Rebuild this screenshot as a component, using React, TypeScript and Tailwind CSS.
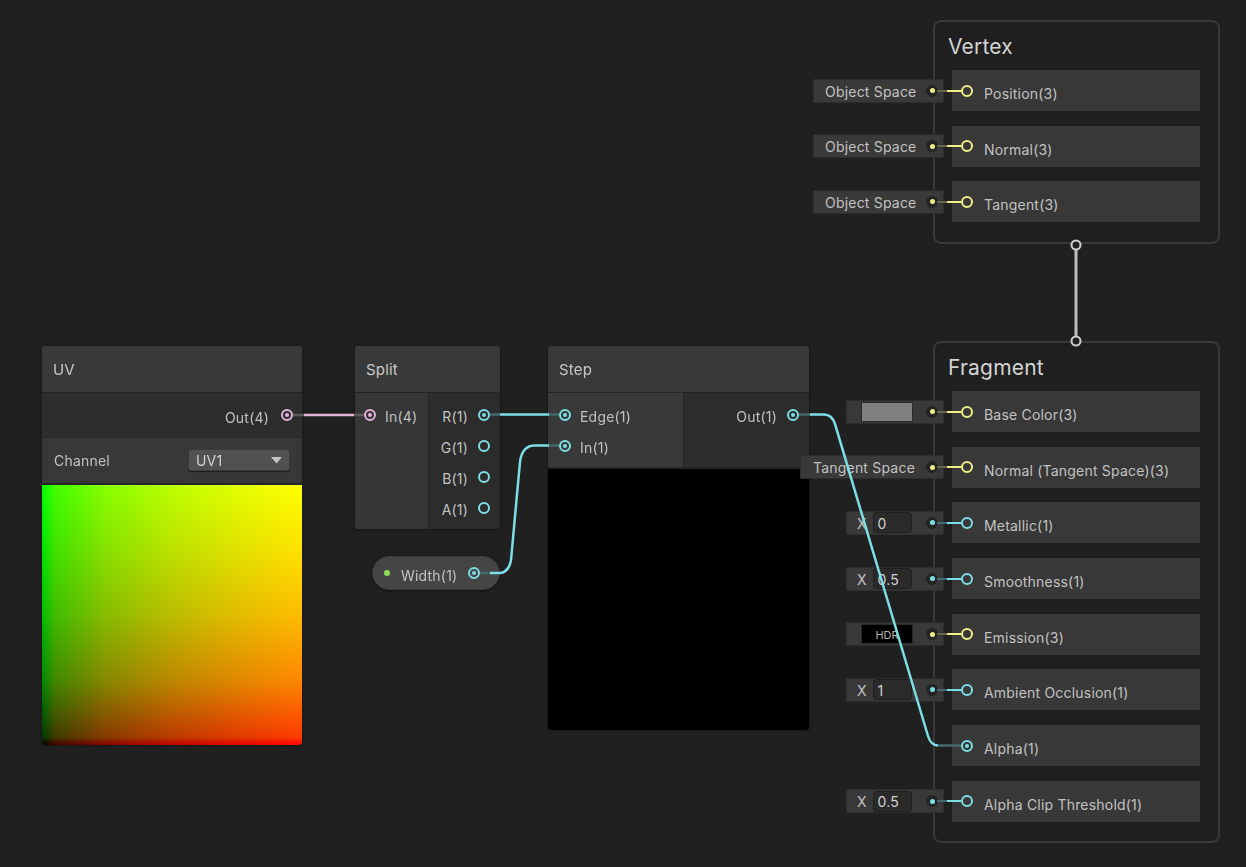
import React from 'react';

type C = 'cyan' | 'yellow' | 'pink';

const RING: Record<C, string> = {
  cyan: 'border-[#7ddfe6]',
  yellow: 'border-[#efef86]',
  pink: 'border-[#e5b3d9]',
};
const DOT: Record<C, string> = {
  cyan: 'bg-[#7ddfe6]',
  yellow: 'bg-[#efef86]',
  pink: 'bg-[#e5b3d9]',
};
const DIM: Record<C, string> = {
  cyan: 'bg-[#45686b]',
  yellow: 'bg-[#66664a]',
  pink: 'bg-[#5c5c5c]',
};

function Port({ c, filled }: { c: C; filled?: boolean }) {
  return (
    <span
      className={`flex h-[12px] w-[12px] shrink-0 items-center justify-center rounded-full border-2 ${RING[c]}`}
    >
      {filled && <span className={`h-[4px] w-[4px] rounded-full ${DOT[c]}`} />}
    </span>
  );
}

function Box({ w, c, children }: { w: string; c: C; children: React.ReactNode }) {
  return (
    <div
      className={`absolute right-full top-1/2 mr-[8px] flex h-[24px] -translate-y-1/2 items-center border border-[#2d2d2d] bg-[#393939] ${w}`}
    >
      {children}
      <span className="ml-auto mr-[5px] flex h-[12px] w-[12px] shrink-0 items-center justify-center rounded-full bg-[#242424]">
        <span className={`h-[5px] w-[5px] rounded-full ${DOT[c]}`} />
      </span>
    </div>
  );
}

function XField({ v }: { v: string }) {
  return (
    <>
      <span className="ml-[10px] pt-[1px] text-[14px] text-[#c2c2c2]">X</span>
      <span className="ml-[6px] flex h-[21px] w-[39px] items-center rounded-[3px] border border-[#1f1f1f] bg-[#2a2a2a] pl-[4px] pt-[1px] text-[14px] tracking-[0.2px] text-[#d0d0d0]">
        {v}
      </span>
    </>
  );
}

function MRow({
  label,
  c,
  filled,
  input,
  wire = true,
}: {
  label: string;
  c: C;
  filled?: boolean;
  input?: React.ReactNode;
  wire?: boolean;
}) {
  return (
    <div className="relative flex h-[41px] items-center bg-[#383838] pl-[9px]">
      {input}
      {wire && (
        <>
          <span className={`absolute left-[-15px] top-1/2 h-[2px] w-[10px] -translate-y-1/2 ${DIM[c]}`} />
          <span className={`absolute left-[-5px] top-1/2 h-[2px] w-[14px] -translate-y-1/2 ${DOT[c]}`} />
        </>
      )}
      <Port c={c} filled={filled} />
      <span className="ml-[11px] pt-[6px] text-[14px] tracking-[0.2px] text-[#c2c2c2]">{label}</span>
    </div>
  );
}

function Header({ title }: { title: string }) {
  return (
    <div className="flex h-[47px] items-center border-b border-[#242424] bg-[#393939] pl-[11px] pt-[2px] text-[15px] tracking-[0.2px] text-[#c8c8c8]">
      {title}
    </div>
  );
}

function InRow({ label, c, filled }: { label: string; c: C; filled?: boolean }) {
  return (
    <div className="flex h-[31px] items-center">
      <Port c={c} filled={filled} />
      <span className="ml-[9px] pt-[4px] text-[14px] tracking-[0.2px] text-[#c2c2c2]">{label}</span>
    </div>
  );
}

function OutRow({ label, c, filled }: { label: string; c: C; filled?: boolean }) {
  return (
    <div className="flex h-[31px] items-center justify-end gap-[10px]">
      <span className="pt-[4px] text-[14px] tracking-[0.2px] text-[#c2c2c2]">{label}</span>
      <Port c={c} filled={filled} />
    </div>
  );
}

export default function App() {
  return (
    <div className="relative h-[867px] w-[1246px] overflow-hidden bg-[#202020] font-['Inter',sans-serif]">
      {/* UV node */}
      <div className="absolute left-[42px] top-[346px] w-[260px] overflow-hidden rounded-[3px] bg-[#2d2d2d] shadow-[0_0_3px_rgba(0,0,0,0.5)]">
        <Header title="UV" />
        <div className="flex h-[45px] items-center justify-end gap-[12px] border-b border-[#262626] bg-[#2d2d2d] pr-[9px]">
          <span className="pt-[4px] text-[14px] tracking-[0.2px] text-[#c2c2c2]">Out(4)</span>
          <Port c="pink" filled />
        </div>
        <div className="flex h-[47px] items-center justify-between border-b-2 border-[#252525] bg-[#383838] pb-[1px] pl-[12px] pr-[12px]">
          <span className="text-[14px] tracking-[0.2px] text-[#c2c2c2]">Channel</span>
          <div className="flex h-[22px] w-[102px] items-center justify-between rounded-[3px] border border-[#3c3c3c] bg-[#515151] pl-[7px] pr-[7px] shadow-[0_1px_1px_rgba(0,0,0,0.5)]">
            <span className="pt-[1px] text-[14px] tracking-[0.2px] text-[#d2d2d2]">UV1</span>
            <svg width="11" height="7" viewBox="0 0 11 7">
              <polygon points="0,0 11,0 5.5,6.5" fill="#c4c4c4" />
            </svg>
          </div>
        </div>
        <div className="relative h-[260px] w-full bg-[linear-gradient(to_right,#000_0%,#410000_5%,#880000_25%,#bc0000_50%,#e10000_75%,#ff0000_100%)]">
          <div className="absolute inset-0 mix-blend-screen bg-[linear-gradient(to_top,#000_0%,#003a00_3%,#008800_25%,#00bc00_50%,#00e100_75%,#00ff00_100%)]" />
        </div>
      </div>

      {/* Split node */}
      <div className="absolute left-[355px] top-[346px] w-[145px] overflow-hidden rounded-[3px] bg-[#2c2c2c] shadow-[0_0_3px_rgba(0,0,0,0.5)]">
        <Header title="Split" />
        <div className="flex h-[136px]">
          <div className="w-[74px] border-r border-[#262626] bg-[#363636] pl-[9px] pt-[6px]">
            <InRow label="In(4)" c="pink" filled />
          </div>
          <div className="flex-1 bg-[#2c2c2c] pr-[10px] pt-[6px]">
            <OutRow label="R(1)" c="cyan" filled />
            <OutRow label="G(1)" c="cyan" />
            <OutRow label="B(1)" c="cyan" />
            <OutRow label="A(1)" c="cyan" />
          </div>
        </div>
      </div>

      {/* Width property */}
      <div className="absolute left-[372px] top-[556px] flex h-[34px] w-[128px] items-center rounded-full border border-[#3a3a3a] bg-[#454545] pl-[11px] shadow-[0_1px_3px_rgba(0,0,0,0.5)]">
        <span className="h-[6px] w-[6px] rounded-full bg-[#8fdc5a]" />
        <span className="ml-[11px] pt-[4px] text-[14px] tracking-[0.2px] text-[#c2c2c2]">Width(1)</span>
        <span className="ml-[11px]">
          <Port c="cyan" filled />
        </span>
      </div>

      {/* Step node */}
      <div className="absolute left-[548px] top-[346px] w-[261px] overflow-hidden rounded-[3px] bg-[#2c2c2c] shadow-[0_0_3px_rgba(0,0,0,0.5)]">
        <Header title="Step" />
        <div className="flex h-[76px] border-b-2 border-[#252525]">
          <div className="w-[136px] border-r border-[#262626] bg-[#393939] pl-[11px] pt-[6px]">
            <InRow label="Edge(1)" c="cyan" filled />
            <InRow label="In(1)" c="cyan" filled />
          </div>
          <div className="flex-1 bg-[#2c2c2c] pr-[10px] pt-[6px]">
            <OutRow label="Out(1)" c="cyan" filled />
          </div>
        </div>
        <div className="h-[261px] w-full bg-black" />
      </div>

      {/* Vertex block */}
      <div className="absolute left-[933px] top-[20px] h-[224px] w-[287px] rounded-[8px] border-2 border-[#393939] bg-[#1f1f1f]">
        <div className="flex h-[48px] items-center pl-[13px] pt-[2px] text-[21px] tracking-[0.2px] text-[#d4d4d4]">Vertex</div>
        <div className="ml-[17px] flex w-[248px] flex-col gap-[14.7px]">
          <MRow
            label="Position(3)"
            c="yellow"
            input={
              <Box w="w-[131px]" c="yellow">
                <span className="pl-[11px] pt-[1px] text-[14px] tracking-[0.2px] text-[#c2c2c2]">Object Space</span>
              </Box>
            }
          />
          <MRow
            label="Normal(3)"
            c="yellow"
            input={
              <Box w="w-[131px]" c="yellow">
                <span className="pl-[11px] pt-[1px] text-[14px] tracking-[0.2px] text-[#c2c2c2]">Object Space</span>
              </Box>
            }
          />
          <MRow
            label="Tangent(3)"
            c="yellow"
            input={
              <Box w="w-[131px]" c="yellow">
                <span className="pl-[11px] pt-[1px] text-[14px] tracking-[0.2px] text-[#c2c2c2]">Object Space</span>
              </Box>
            }
          />
        </div>
      </div>

      {/* Fragment block */}
      <div className="absolute left-[933px] top-[341px] h-[502px] w-[287px] rounded-[8px] border-2 border-[#393939] bg-[#1f1f1f]">
        <div className="flex h-[48px] items-center pl-[13px] pt-[2px] text-[21px] tracking-[0.2px] text-[#d4d4d4]">Fragment</div>
        <div className="ml-[17px] flex w-[248px] flex-col gap-[14.7px]">
          <MRow
            label="Base Color(3)"
            c="yellow"
            input={
              <Box w="w-[98px]" c="yellow">
                <span className="ml-[14px] h-[20px] w-[52px] border border-[#2a2a2a] bg-[#808080]" />
              </Box>
            }
          />
          <MRow
            label="Normal (Tangent Space)(3)"
            c="yellow"
            input={
              <Box w="w-[144px]" c="yellow">
                <span className="pl-[12px] pt-[1px] text-[14px] tracking-[0.2px] text-[#c2c2c2]">Tangent Space</span>
              </Box>
            }
          />
          <MRow
            label="Metallic(1)"
            c="cyan"
            input={
              <Box w="w-[98px]" c="cyan">
                <XField v="0" />
              </Box>
            }
          />
          <MRow
            label="Smoothness(1)"
            c="cyan"
            input={
              <Box w="w-[98px]" c="cyan">
                <XField v="0.5" />
              </Box>
            }
          />
          <MRow
            label="Emission(3)"
            c="yellow"
            input={
              <Box w="w-[98px]" c="yellow">
                <span className="ml-[14px] flex h-[20px] w-[52px] items-center justify-center border border-[#2a2a2a] bg-black pt-[1px] text-[11px] text-[#b0b0b0]">
                  HDR
                </span>
              </Box>
            }
          />
          <MRow
            label="Ambient Occlusion(1)"
            c="cyan"
            input={
              <Box w="w-[98px]" c="cyan">
                <XField v="1" />
              </Box>
            }
          />
          <MRow label="Alpha(1)" c="cyan" filled wire={false} />
          <MRow
            label="Alpha Clip Threshold(1)"
            c="cyan"
            input={
              <Box w="w-[98px]" c="cyan">
                <XField v="0.5" />
              </Box>
            }
          />
        </div>
      </div>

      {/* Wires */}
      <svg className="pointer-events-none absolute left-0 top-0" width="1246" height="867" fill="none">
        {/* UV -> Split */}
        <path d="M293 415 H304" stroke="#5c5c5c" strokeWidth="2.5" />
        <path d="M304 415 H354" stroke="#e5b3d9" strokeWidth="2.5" />
        <path d="M354 415 H364" stroke="#5c5c5c" strokeWidth="2.5" />
        {/* R -> Edge */}
        <path d="M490 414.5 H500" stroke="#45686b" strokeWidth="2.5" />
        <path d="M500 414.5 H549" stroke="#7ddfe6" strokeWidth="2.5" />
        <path d="M549 414.5 H559" stroke="#45686b" strokeWidth="2.5" />
        {/* Width -> In */}
        <path d="M480 573 H490" stroke="#45686b" strokeWidth="2.5" />
        <path d="M490 573 H500 Q509 572 511 560 L520 462 Q522 446 534 445.5 H549" stroke="#7ddfe6" strokeWidth="2.5" />
        <path d="M549 445.5 H559" stroke="#45686b" strokeWidth="2.5" />
        {/* Step Out -> Alpha */}
        <path d="M799 414.5 H810" stroke="#45686b" strokeWidth="2.5" />
        <path d="M810 414.5 H824 Q832 414.5 835 424 L928 736 Q931 745.5 938 745.5" stroke="#7ddfe6" strokeWidth="2.5" />
        <path d="M938 745.5 H961" stroke="#45686b" strokeWidth="2.5" />
        {/* Vertex -> Fragment connector */}
        <path d="M1076 250 V336" stroke="#bdbdbd" strokeWidth="3" />
        <circle cx="1076" cy="245" r="4.5" stroke="#cfcfcf" strokeWidth="2" fill="#202020" />
        <circle cx="1076" cy="341" r="4.5" stroke="#cfcfcf" strokeWidth="2" fill="#202020" />
      </svg>
    </div>
  );
}
